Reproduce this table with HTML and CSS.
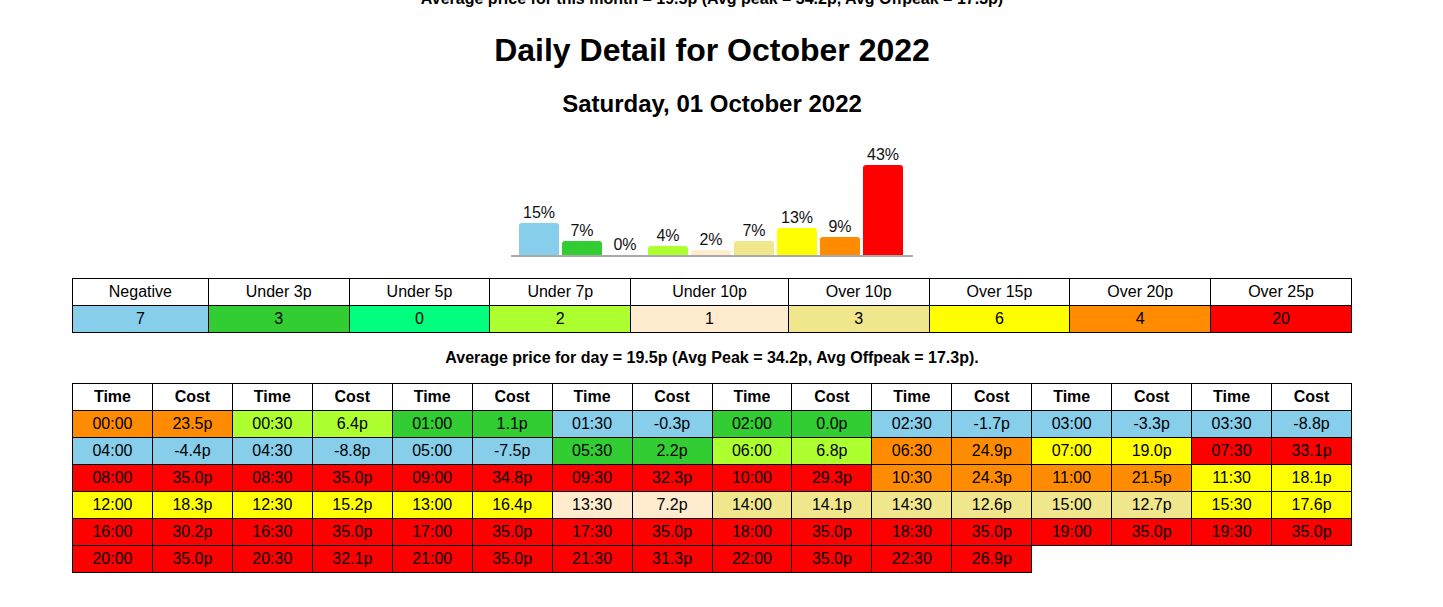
FILE: index.html
```html
<!DOCTYPE html>
<html>
<head>
<meta charset="utf-8">
<title>Daily Detail for October 2022</title>
<link rel="stylesheet" href="styles.css">
</head>
<body>
<div class="page">
  <p class="month">Average price for this month = 19.5p (Avg peak = 34.2p, Avg Offpeak = 17.3p)</p>
  <h1 class="title">Daily Detail for October 2022</h1>
  <h2 class="day">Saturday, 01 October 2022</h2>

  <div class="chart-wrap">
    <div class="chart">
      <div class="col"><span class="lbl">15%</span><div class="bar neg" style="height:32px"></div></div>
      <div class="col"><span class="lbl">7%</span><div class="bar u3" style="height:14px"></div></div>
      <div class="col"><span class="lbl">0%</span><div class="bar u5" style="height:0px"></div></div>
      <div class="col"><span class="lbl">4%</span><div class="bar u7" style="height:9px"></div></div>
      <div class="col"><span class="lbl">2%</span><div class="bar u10" style="height:5px"></div></div>
      <div class="col"><span class="lbl">7%</span><div class="bar o10" style="height:14px"></div></div>
      <div class="col"><span class="lbl">13%</span><div class="bar o15" style="height:27px"></div></div>
      <div class="col"><span class="lbl">9%</span><div class="bar o20" style="height:18px"></div></div>
      <div class="col"><span class="lbl">43%</span><div class="bar o25" style="height:90px"></div></div>
    </div>
  </div>

  <table class="cats">
    <tr>
      <td>Negative</td><td>Under 3p</td><td>Under 5p</td><td>Under 7p</td><td>Under 10p</td><td>Over 10p</td><td>Over 15p</td><td>Over 20p</td><td>Over 25p</td>
    </tr>
    <tr>
      <td class="neg">7</td><td class="u3">3</td><td class="u5">0</td><td class="u7">2</td><td class="u10">1</td><td class="o10">3</td><td class="o15">6</td><td class="o20">4</td><td class="o25">20</td>
    </tr>
  </table>

  <p class="avg">Average price for day = 19.5p (Avg Peak = 34.2p, Avg Offpeak = 17.3p).</p>

  <table class="slots">
    <tr>
      <th>Time</th><th>Cost</th><th>Time</th><th>Cost</th><th>Time</th><th>Cost</th><th>Time</th><th>Cost</th>
      <th>Time</th><th>Cost</th><th>Time</th><th>Cost</th><th>Time</th><th>Cost</th><th>Time</th><th>Cost</th>
    </tr>
    <tr>
      <td class="o20">00:00</td><td class="o20">23.5p</td>
      <td class="u7">00:30</td><td class="u7">6.4p</td>
      <td class="u3">01:00</td><td class="u3">1.1p</td>
      <td class="neg">01:30</td><td class="neg">-0.3p</td>
      <td class="u3">02:00</td><td class="u3">0.0p</td>
      <td class="neg">02:30</td><td class="neg">-1.7p</td>
      <td class="neg">03:00</td><td class="neg">-3.3p</td>
      <td class="neg">03:30</td><td class="neg">-8.8p</td>
    </tr>
    <tr>
      <td class="neg">04:00</td><td class="neg">-4.4p</td>
      <td class="neg">04:30</td><td class="neg">-8.8p</td>
      <td class="neg">05:00</td><td class="neg">-7.5p</td>
      <td class="u3">05:30</td><td class="u3">2.2p</td>
      <td class="u7">06:00</td><td class="u7">6.8p</td>
      <td class="o20">06:30</td><td class="o20">24.9p</td>
      <td class="o15">07:00</td><td class="o15">19.0p</td>
      <td class="o25">07:30</td><td class="o25">33.1p</td>
    </tr>
    <tr>
      <td class="o25">08:00</td><td class="o25">35.0p</td>
      <td class="o25">08:30</td><td class="o25">35.0p</td>
      <td class="o25">09:00</td><td class="o25">34.8p</td>
      <td class="o25">09:30</td><td class="o25">32.3p</td>
      <td class="o25">10:00</td><td class="o25">29.3p</td>
      <td class="o20">10:30</td><td class="o20">24.3p</td>
      <td class="o20">11:00</td><td class="o20">21.5p</td>
      <td class="o15">11:30</td><td class="o15">18.1p</td>
    </tr>
    <tr>
      <td class="o15">12:00</td><td class="o15">18.3p</td>
      <td class="o15">12:30</td><td class="o15">15.2p</td>
      <td class="o15">13:00</td><td class="o15">16.4p</td>
      <td class="u10">13:30</td><td class="u10">7.2p</td>
      <td class="o10">14:00</td><td class="o10">14.1p</td>
      <td class="o10">14:30</td><td class="o10">12.6p</td>
      <td class="o10">15:00</td><td class="o10">12.7p</td>
      <td class="o15">15:30</td><td class="o15">17.6p</td>
    </tr>
    <tr>
      <td class="o25">16:00</td><td class="o25">30.2p</td>
      <td class="o25">16:30</td><td class="o25">35.0p</td>
      <td class="o25">17:00</td><td class="o25">35.0p</td>
      <td class="o25">17:30</td><td class="o25">35.0p</td>
      <td class="o25">18:00</td><td class="o25">35.0p</td>
      <td class="o25">18:30</td><td class="o25">35.0p</td>
      <td class="o25">19:00</td><td class="o25">35.0p</td>
      <td class="o25">19:30</td><td class="o25">35.0p</td>
    </tr>
    <tr>
      <td class="o25">20:00</td><td class="o25">35.0p</td>
      <td class="o25">20:30</td><td class="o25">32.1p</td>
      <td class="o25">21:00</td><td class="o25">35.0p</td>
      <td class="o25">21:30</td><td class="o25">31.3p</td>
      <td class="o25">22:00</td><td class="o25">35.0p</td>
      <td class="o25">22:30</td><td class="o25">26.9p</td>
    </tr>
  </table>
</div>
</body>
</html>
```

FILE: styles.css
```css
html, body {
  margin: 0;
  padding: 0;
  background: #fff;
}

body {
  font-family: "Liberation Sans", Arial, sans-serif;
  font-size: 16px;
  color: #000;
  overflow: hidden;
}

.page {
  width: 1280px;
  margin-left: 72px;
  text-align: center;
}

.month {
  margin: -10px 0 0 0;
  font-weight: bold;
  line-height: 18px;
}

.title {
  margin: 24px 0 0 0;
  font-size: 32px;
  line-height: 37px;
  font-weight: bold;
}

.day {
  margin: 21px 0 0 0;
  font-size: 24px;
  line-height: 28px;
  font-weight: bold;
}

.chart-wrap {
  display: flex;
  justify-content: center;
  margin-top: 28px;
}

.chart {
  display: flex;
  align-items: flex-end;
  gap: 3px;
  padding: 0 10px 0 8px;
  border-bottom: 2px solid #aaaaaa;
}

.col {
  width: 40px;
  display: flex;
  flex-direction: column;
  align-items: center;
}

.lbl {
  font-size: 16px;
  line-height: 18px;
  margin-bottom: 1px;
  color: #111;
}

.bar {
  width: 40px;
  border-radius: 3px 3px 0 0;
}

table {
  border-collapse: collapse;
  width: 1280px;
  font-size: 16px;
}

.cats {
  margin-top: 21px;
}

.cats td {
  border: 1px solid #000;
  padding: 4px 4px;
  line-height: 18px;
  text-align: center;
}

.avg {
  margin: 16px 0;
  font-weight: bold;
}

.slots {
  table-layout: fixed;
}

.slots th,
.slots td {
  border: 1px solid #000;
  padding: 4px 2px;
  line-height: 18px;
  text-align: center;
}

.slots th {
  font-weight: bold;
}

.neg { background: #87ceeb; }
.u3  { background: #32cd32; }
.u5  { background: #00ff7f; }
.u7  { background: #adff2f; }
.u10 { background: #ffebcd; }
.o10 { background: #f0e68c; }
.o15 { background: #ffff00; }
.o20 { background: #ff8c00; }
.o25 { background: #ff0000; }
```
